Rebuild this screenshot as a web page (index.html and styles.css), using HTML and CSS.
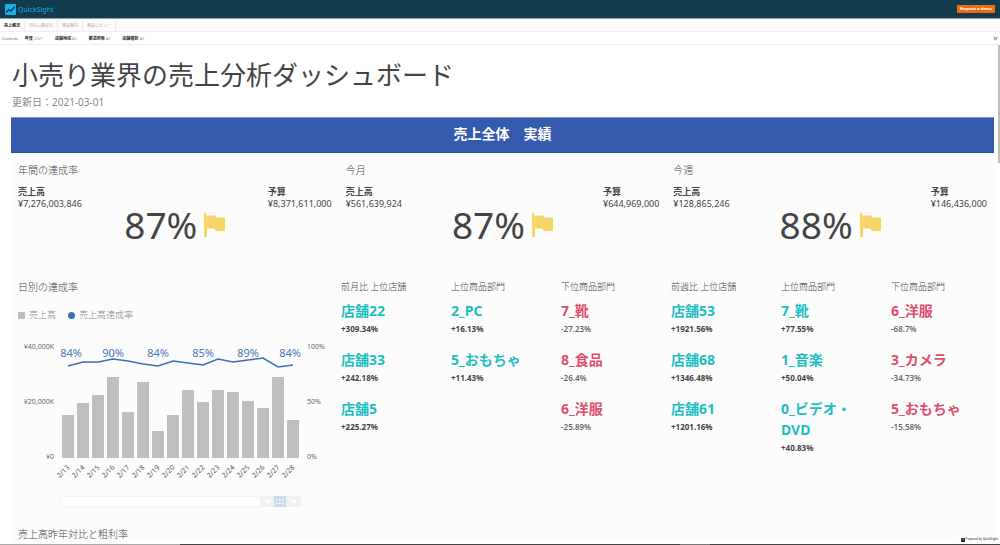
FILE: index.html
```html
<!DOCTYPE html>
<html lang="ja">
<head>
<meta charset="utf-8">
<title>QuickSight</title>
<link rel="stylesheet" href="styles.css">
</head>
<body>
<header class="topbar">
  <a class="brand" href="#">
    <svg class="brand-icon" viewBox="0 0 12 12" aria-hidden="true"><rect width="12" height="12" rx="1" fill="#17b0ee"/><path d="M1.200 8.200 4 5l2 1.800L10.800 2v2.200L6.200 9 4.300 7.200 1.200 10.300z" fill="#123b4c"/></svg>
    <span>QuickSight</span>
  </a>
  <button class="demo" type="button">Request a demo</button>
</header>
<nav class="tabs">
  <a class="tab active" href="#">売上概況</a>
  <a class="tab" href="#">自社vs競合比</a>
  <a class="tab" href="#">商品販売</a>
  <a class="tab" href="#">商品レビュー</a>
</nav>
<div class="controls">
  <span class="controls-title">Controls</span>
  <span class="control"><b>年度</b> 2021</span>
  <span class="control"><b>店舗地域</b> All</span>
  <span class="control"><b>都道府県</b> All</span>
  <span class="control"><b>店舗種類</b> All</span>
  <button class="expand" type="button" aria-label="Expand controls"><svg viewBox="0 0 6 5"><path d="M.8.6 3 2.400 5.200.6M.8 2.400 3 4.200 5.200 2.400" fill="none" stroke="#666" stroke-width="1"/></svg></button>
</div>
<main class="sheet">
  <div class="heading">
    <h1>小売り業界の売上分析ダッシュボード</h1>
    <p>更新日：2021-03-01</p>
  </div>
  <h2 class="band">売上全体　実績</h2>
  <section class="kpis">
    <article class="kpi">
      <h3>年間の達成率</h3>
      <div class="compare"><div><b>売上高</b><span>¥7,276,003,846</span></div><div><b>予算</b><span>¥8,371,611,000</span></div></div>
      <div class="rate"><span>87%</span><svg class="flag" viewBox="0 0 21 24"><path d="M0 0h2v2.500h9l1 2h9V18h-9.500l-1-2.500H3V24H0z"/></svg></div>
    </article>
    <article class="kpi">
      <h3>今月</h3>
      <div class="compare"><div><b>売上高</b><span>¥561,639,924</span></div><div><b>予算</b><span>¥644,969,000</span></div></div>
      <div class="rate"><span>87%</span><svg class="flag" viewBox="0 0 21 24"><path d="M0 0h2v2.500h9l1 2h9V18h-9.500l-1-2.500H3V24H0z"/></svg></div>
    </article>
    <article class="kpi">
      <h3>今週</h3>
      <div class="compare"><div><b>売上高</b><span>¥128,865,246</span></div><div><b>予算</b><span>¥146,436,000</span></div></div>
      <div class="rate"><span>88%</span><svg class="flag" viewBox="0 0 21 24"><path d="M0 0h2v2.500h9l1 2h9V18h-9.500l-1-2.500H3V24H0z"/></svg></div>
    </article>
  </section>
  <section class="details">
    <article class="daily">
      <h3>日別の達成率</h3>
      <div class="legend"><span class="key sales">売上高</span><span class="key ratio">売上高達成率</span></div>
      <svg class="chart" viewBox="0 0 316 176" role="img" aria-label="日別の達成率">
        <g class="axis">
          <text class="end" x="36" y="18">¥40,000K</text><text class="end" x="36" y="73">¥20,000K</text><text class="end" x="36" y="128">¥0</text>
          <text x="289" y="18">100%</text><text x="289" y="73">50%</text><text x="289" y="128">0%</text>
        </g>
        <g id="bars" class="bars"></g>
        <g id="days" class="days"></g>
        <polyline id="ratio" class="line"/>
        <g class="points">
          <text x="53" y="26">84%</text><text x="95" y="26">90%</text><text x="140" y="26">84%</text><text x="185" y="26">85%</text><text x="230" y="26">89%</text><text x="272" y="26">84%</text>
        </g>
        <rect x="42.500" y="165.500" width="240" height="10" fill="#fff" stroke="#f3f3f3"/>
        <rect x="242" y="165" width="41" height="11" fill="#f1f1f1"/>
        <rect x="256" y="165" width="12" height="11" fill="#cbdaea"/>
        <path d="M258 169h8M258 172.500h8" stroke="#fff" stroke-width="1.500" stroke-dasharray="1.500 1.500"/>
        <path d="M247 170.500h5M273 170.500h5" stroke="#fff" stroke-width="2"/>
      </svg>
    </article>
    <article class="rank"><h4>前月比 上位店舗</h4><ul>
      <li><b>店舗22</b><span>+309.34%</span></li><li><b>店舗33</b><span>+242.18%</span></li><li><b>店舗5</b><span>+225.27%</span></li></ul></article>
    <article class="rank"><h4>上位商品部門</h4><ul>
      <li><b>2_PC</b><span>+16.13%</span></li><li><b>5_おもちゃ</b><span>+11.43%</span></li></ul></article>
    <article class="rank low ruled"><h4>下位商品部門</h4><ul>
      <li><b>7_靴</b><span>-27.23%</span></li><li><b>8_食品</b><span>-26.4%</span></li><li><b>6_洋服</b><span>-25.89%</span></li></ul></article>
    <article class="rank ruled"><h4>前週比 上位店舗</h4><ul>
      <li><b>店舗53</b><span>+1921.56%</span></li><li><b>店舗68</b><span>+1346.48%</span></li><li><b>店舗61</b><span>+1201.16%</span></li></ul></article>
    <article class="rank ruled"><h4>上位商品部門</h4><ul>
      <li><b>7_靴</b><span>+77.55%</span></li><li><b>1_音楽</b><span>+50.04%</span></li><li><b>0_ビデオ・<br>DVD</b><span>+40.83%</span></li></ul></article>
    <article class="rank low"><h4>下位商品部門</h4><ul>
      <li><b>6_洋服</b><span>-68.7%</span></li><li><b>3_カメラ</b><span>-34.73%</span></li><li><b>5_おもちゃ</b><span>-15.58%</span></li></ul></article>
  </section>
  <section class="next"><h3>売上高昨年対比と粗利率</h3></section>
</main>
<div class="scroll-thumb"></div>
<div class="powered"><svg viewBox="0 0 4 4"><path d="M0 0h4v4H0z" fill="#222"/><path d="M.5 2.200 1.500 1l.8.6L3.500.5" stroke="#fff" stroke-width=".5" fill="none"/></svg>Powered by QuickSight</div>
<div class="progress"><span class="played"></span><span class="marker"></span></div>
<script src="chart.js"></script>
</body>
</html>
```
FILE: styles.css
```css
* { box-sizing: border-box; }
body {
  margin: 0;
  min-height: 100vh;
  position: relative;
  display: flex;
  flex-direction: column;
  background: #fff;
  color: #444;
  font-family: "Noto Sans", "Noto Sans CJK JP", sans-serif;
}
h1, h2, h3, h4, p, ul { margin: 0; padding: 0; font-weight: 400; }
b { font-weight: 700; }
ul { list-style: none; }
a { color: inherit; text-decoration: none; }
button { border: 0; padding: 0; font-family: inherit; cursor: pointer; }
.topbar {
  flex: none;
  height: 19px;
  padding: 0 5px;
  display: flex;
  align-items: center;
  justify-content: space-between;
  background: #123b4c;
  border-bottom: 1px solid #8aa0aa;
}
.brand { display: flex; align-items: center; gap: 2px; color: #17a5e0; font-size: 7px; }
.brand-icon { width: 11px; height: 11px; }
.demo {
  width: 38px;
  height: 8px;
  line-height: 8px;
  background: #ed6b0c;
  color: #fff;
  font-size: 4px;
  font-weight: 700;
  text-align: center;
}
.tabs {
  flex: none;
  height: 13px;
  padding-top: 2px;
  display: flex;
  background: #fbfbfb;
  border-bottom: 1px solid #eee;
  font-size: 4px;
  line-height: 10px;
  color: #aaa;
}
.tab { padding: 0 4px; border-right: 1px solid #e8e8e8; }
.tab.active { background: #fff; color: #222; font-weight: 700; }
.controls {
  flex: none;
  height: 13px;
  padding: 0 2px;
  display: flex;
  align-items: center;
  gap: 12px;
  border-bottom: 1px solid #eee;
  font-size: 4px;
  color: #999;
}
.controls-title { color: #555; margin-right: -5px; }
.control b { color: #222; }
.expand { margin-left: auto; width: 5px; height: 5px; display: flex; background: none; }
.sheet { padding: 12px 6px 0 11px; }
.heading { padding-left: 1px; height: 60px; }
h1 { font-size: 26px; line-height: 36px; }
.heading p { font-size: 10px; line-height: 18px; color: #888; }
.band {
  height: 36px;
  line-height: 32px;
  background: #365aae;
  border-top: 1px solid #7f96c9;
  border-bottom: 1px solid #284da5;
  color: #fff;
  font-size: 14px;
  font-weight: 700;
  text-align: center;
}
.kpis { display: grid; grid-template-columns: repeat(3, 1fr); background: #fcfcfc; }
.kpi { padding: 9px 7px 20px; }
h3 { font-size: 10px; line-height: 16px; font-weight: 300; }
.compare { display: flex; justify-content: space-between; margin-top: 8px; font-size: 9px; line-height: 12px; }
.compare b, .compare span { display: block; }
.rate { display: flex; align-items: center; justify-content: center; gap: 7px; font-size: 37px; line-height: 30px; }
.flag { width: 21px; height: 24px; fill: #f8d568; }
.details { display: grid; grid-template-columns: 323fr repeat(6, 110fr); background: #fcfcfc; }
.daily { padding: 19px 0 0 7px; }
.legend { display: flex; gap: 12px; margin-top: 12px; font-size: 9px; line-height: 16px; font-weight: 300; color: #888; }
.key { display: flex; align-items: center; gap: 4px; }
.key::before { content: ""; width: 7px; height: 7px; background: #bfbfbf; }
.key.ratio::before { border-radius: 50%; background: #3c6eb8; }
.chart { display: block; width: 100%; margin-top: 8px; overflow: visible; }
.axis { font-size: 7px; fill: #666; }
.end { text-anchor: end; }
.bars { fill: #bfbfbf; }
.days { font-size: 7px; fill: #555; text-anchor: end; }
.line { fill: none; stroke: #3c6eb8; stroke-width: 1.5; }
.points { font-size: 11px; fill: #4a76bd; text-anchor: middle; }
.rank { padding: 19px 0 0 7px; }
.ruled { box-shadow: inset 1px 0 #fff; }
h4 { font-size: 9px; line-height: 15px; font-weight: 300; }
.rank ul { display: grid; gap: 13px; margin-top: 6px; }
.rank li b { display: block; font-size: 14px; line-height: 21px; color: #1dbec2; }
.rank li span { display: block; font-size: 8px; line-height: 15px; font-weight: 700; }
.rank.low li b { color: #dc5069; }
.rank.low li span { font-weight: 600; color: #666; }
.next { padding: 19px 7px 0; background: #fcfcfc; }
.scroll-thumb { position: absolute; right: 0; top: 45px; width: 2px; height: 118px; background: #bdbdbd; }
.powered {
  position: absolute;
  right: 0;
  bottom: 2px;
  padding: 0 2px;
  display: flex;
  align-items: center;
  gap: 1px;
  background: #fff;
  font-size: 3px;
  line-height: 7px;
  color: #222;
}
.powered svg { width: 4px; height: 4px; }
.progress { position: absolute; left: 0; right: 0; bottom: 0; height: 1px; display: flex; background: #444; }
.played { width: 18%; background: #aaa; }
.marker { width: 3%; margin-left: 50%; background: #777; }
```
FILE: chart.js
```javascript
const ns = 'http://www.w3.org/2000/svg';
const sales = [43, 55, 63, 81, 46, 76, 27, 43, 68, 56, 68, 66, 57, 50, 81, 38];
const ratio = [35, 31, 31, 28, 30, 33, 35, 30, 32, 34, 28, 31, 29, 27, 36, 34];
const base = 127;
const pitch = 15;
const bars = document.getElementById('bars');
const days = document.getElementById('days');
sales.forEach((value, i) => {
  const bar = document.createElementNS(ns, 'rect');
  bar.setAttribute('x', 44 + i * pitch);
  bar.setAttribute('y', base - value);
  bar.setAttribute('width', 12);
  bar.setAttribute('height', value);
  bars.append(bar);
  const day = document.createElementNS(ns, 'text');
  day.setAttribute('transform', `translate(${52 + i * pitch} 137) rotate(-45)`);
  day.textContent = `2/${13 + i}`;
  days.append(day);
});
document.getElementById('ratio').setAttribute('points',
  ratio.map((y, i) => `${50 + i * pitch},${y}`).join(' '));
```
